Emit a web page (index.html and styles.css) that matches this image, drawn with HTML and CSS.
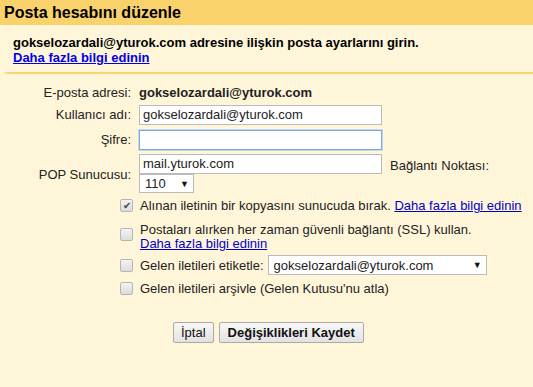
FILE: index.html
```html
<!DOCTYPE html>
<html lang="tr">
<head>
<meta charset="utf-8">
<link rel="stylesheet" href="styles.css">
</head>
<body>
<div class="header"><h1>Posta hesabını düzenle</h1></div>
<div class="intro">
  <div class="intro-text">gokselozardali@yturok.com adresine ilişkin posta ayarlarını girin.</div>
  <a href="#" class="link bold">Daha fazla bilgi edinin</a>
</div>
<div class="sep"></div>
<table class="form">
  <tr>
    <td class="lbl">E-posta adresi:</td>
    <td class="val bold">gokselozardali@yturok.com</td>
  </tr>
  <tr>
    <td class="lbl">Kullanıcı adı:</td>
    <td class="val"><div class="input">gokselozardali@yturok.com</div></td>
  </tr>
  <tr>
    <td class="lbl">Şifre:</td>
    <td class="val"><div class="input focus"></div></td>
  </tr>
  <tr>
    <td class="lbl pop">POP Sunucusu:</td>
    <td class="val">
      <div class="pop-row"><div class="input">mail.yturok.com</div><span class="port-lbl">Bağlantı Noktası:</span></div>
      <div class="select port"><span>110</span><span class="arrow">▼</span></div>
    </td>
  </tr>
</table>
<div class="opts">
  <div class="opt o1"><span class="cb checked">✔</span><span>Alınan iletinin bir kopyasını sunucuda bırak. <a href="#" class="link">Daha fazla bilgi edinin</a></span></div>
  <div class="opt o2"><span class="cb"></span><span>Postaları alırken her zaman güvenli bağlantı (SSL) kullan.<br><a href="#" class="link">Daha fazla bilgi edinin</a></span></div>
  <div class="opt o3 mid"><span class="cb"></span><span>Gelen iletileri etiketle:</span><div class="select label"><span>gokselozardali@yturok.com</span><span class="arrow">▼</span></div></div>
  <div class="opt o4"><span class="cb"></span><span>Gelen iletileri arşivle (Gelen Kutusu'nu atla)</span></div>
</div>
<div class="buttons">
  <button class="btn">İptal</button>
  <button class="btn bold">Değişiklikleri Kaydet</button>
</div>
</body>
</html>
```
FILE: styles.css
```css
html, body {
  margin: 0;
  padding: 0;
  background: #fff6d9;
  font-family: "Liberation Sans", Arial, sans-serif;
  font-size: 13px;
  color: #222;
  height: 100%;
}
.header {
  background: #f9d26b;
  height: 25px;
  padding: 0 4px;
}
.header h1 {
  margin: 0;
  font-size: 16px;
  line-height: 25px;
  font-weight: bold;
  color: #000;
}
.intro {
  padding: 10px 13px 0;
  line-height: 15px;
}
.intro-text {
  font-weight: bold;
  color: #000;
}
.bold { font-weight: bold; }
.link {
  color: #0000cc;
  text-decoration: underline;
}
.intro .link { color: #0000ee; }
.sep {
  margin: 7px 0 0 4px;
  height: 2px;
  background: linear-gradient(to right, #fbe6a8, #f8d46f 6px, #f8d46f);
}
.form {
  border-collapse: collapse;
  margin-top: 7px;
}
.form td {
  padding: 0;
  vertical-align: middle;
}
.lbl {
  width: 131px;
  text-align: right;
  padding-right: 4px !important;
  height: 25px;
}
.lbl.pop { padding-top: 4px !important; }
.val { padding-left: 4px !important; }
.form tr:first-child td { height: 20px; padding-top: 1px; }
.input {
  box-sizing: border-box;
  width: 243px;
  height: 20px;
  border: 1px solid #bbb;
  background: #fff;
  padding: 0 3px;
  line-height: 18px;
  font-size: 13px;
  color: #222;
}
.input.focus {
  border-color: #7ea6dd;
  box-shadow: 0 0 0 1px #c5d8f3;
}
.pop-row {
  display: flex;
  align-items: center;
  gap: 8px;
  margin-top: 2px;
}
.port-lbl { padding-top: 3px; }
.select {
  display: inline-flex;
  justify-content: space-between;
  align-items: center;
  box-sizing: border-box;
  height: 19px;
  border: 1px solid #bbb;
  background: #fff;
  padding: 0 4px 0 5px;
  color: #222;
}
.select .arrow { font-size: 9px; color: #111; }
.port { width: 55px; margin-top: 0; }
.opts {
  margin: 6px 0 0 120px;
}
.opt {
  display: flex;
  align-items: flex-start;
  gap: 7px;
  line-height: 13px;
}
.o1 { margin-bottom: 11px; }
.o2 { margin-bottom: 4px; line-height: 14px; }
.o2 .cb { margin-top: 5px; }
.o3 { margin-bottom: 7px; }
.opt.mid { align-items: center; }
.cb {
  flex: none;
  box-sizing: border-box;
  width: 13px;
  height: 13px;
  border: 1px solid #b5b5b5;
  border-radius: 2px;
  background: linear-gradient(#f3f3f3, #dcdcdc);
  margin-top: 0;
  font-size: 10px;
  line-height: 11px;
  text-align: center;
  color: #444;
}
.label {
  width: 219px;
  height: 20px;
  margin-left: -3px;
}
.buttons {
  display: flex;
  gap: 5px;
  margin: 27px 0 0 173px;
}
.btn {
  font-family: "Liberation Sans", Arial, sans-serif;
  font-size: 13px;
  height: 21px;
  padding: 0 7px;
  border: 1px solid #aaa;
  border-radius: 2px;
  background: linear-gradient(#f8f8f8, #e2e2e2);
  color: #111;
}
.btn.bold { padding: 0 8px; }
```
